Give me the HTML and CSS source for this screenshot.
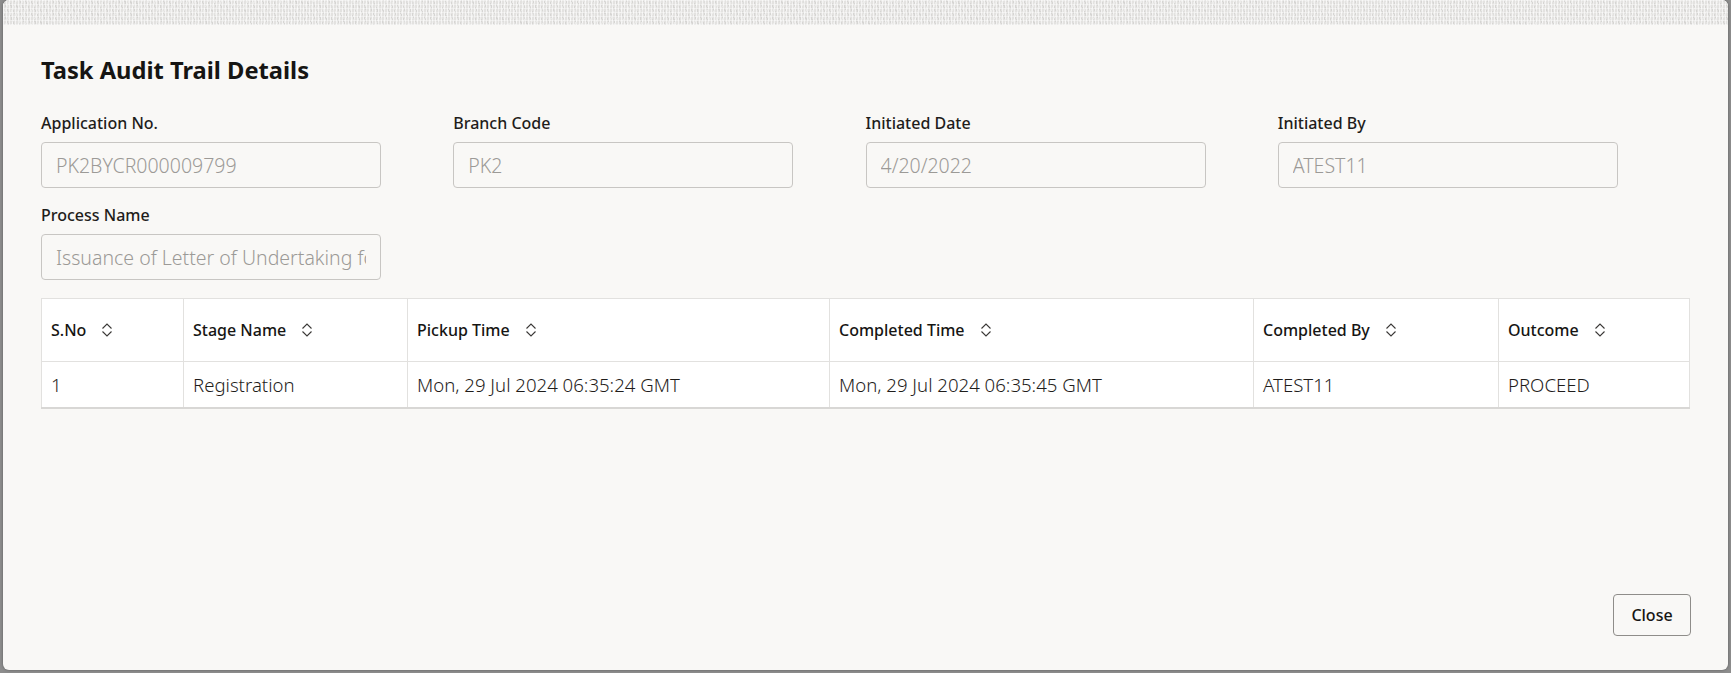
FILE: index.html
```html
<!DOCTYPE html>
<html lang="en">
<head>
<meta charset="utf-8">
<title>Task Audit Trail Details</title>
<link rel="stylesheet" href="styles.css">
</head>
<body>
<div class="dialog">
  <div class="dialog-strip"></div>
  <div class="dialog-body">
    <h1 class="title">Task Audit Trail Details</h1>
    <div class="fields">
      <div class="field">
        <label class="field-label">Application No.</label>
        <input class="field-input" type="text" readonly value="PK2BYCR000009799">
      </div>
      <div class="field">
        <label class="field-label">Branch Code</label>
        <input class="field-input" type="text" readonly value="PK2">
      </div>
      <div class="field">
        <label class="field-label">Initiated Date</label>
        <input class="field-input" type="text" readonly value="4/20/2022">
      </div>
      <div class="field">
        <label class="field-label">Initiated By</label>
        <input class="field-input" type="text" readonly value="ATEST11">
      </div>
      <div class="field">
        <label class="field-label">Process Name</label>
        <input class="field-input" type="text" readonly value="Issuance of Letter of Undertaking for Import">
      </div>
    </div>
    <table class="grid">
      <colgroup>
        <col class="c1"><col class="c2"><col class="c3"><col class="c4"><col class="c5"><col class="c6">
      </colgroup>
      <thead>
        <tr>
          <th><span class="th-inner">S.No<svg class="sort" viewBox="0 0 12 14" width="12" height="14"><path d="M1.5 5.5 L6 1 L10.5 5.5 M1.5 8.5 L6 13 L10.5 8.5"/></svg></span></th>
          <th><span class="th-inner">Stage Name<svg class="sort" viewBox="0 0 12 14" width="12" height="14"><path d="M1.5 5.5 L6 1 L10.5 5.5 M1.5 8.5 L6 13 L10.5 8.5"/></svg></span></th>
          <th><span class="th-inner">Pickup Time<svg class="sort" viewBox="0 0 12 14" width="12" height="14"><path d="M1.5 5.5 L6 1 L10.5 5.5 M1.5 8.5 L6 13 L10.5 8.5"/></svg></span></th>
          <th><span class="th-inner">Completed Time<svg class="sort" viewBox="0 0 12 14" width="12" height="14"><path d="M1.5 5.5 L6 1 L10.5 5.5 M1.5 8.5 L6 13 L10.5 8.5"/></svg></span></th>
          <th><span class="th-inner">Completed By<svg class="sort" viewBox="0 0 12 14" width="12" height="14"><path d="M1.5 5.5 L6 1 L10.5 5.5 M1.5 8.5 L6 13 L10.5 8.5"/></svg></span></th>
          <th><span class="th-inner">Outcome<svg class="sort" viewBox="0 0 12 14" width="12" height="14"><path d="M1.5 5.5 L6 1 L10.5 5.5 M1.5 8.5 L6 13 L10.5 8.5"/></svg></span></th>
        </tr>
      </thead>
      <tbody>
        <tr>
          <td>1</td>
          <td>Registration</td>
          <td>Mon, 29 Jul 2024 06:35:24 GMT</td>
          <td>Mon, 29 Jul 2024 06:35:45 GMT</td>
          <td>ATEST11</td>
          <td>PROCEED</td>
        </tr>
      </tbody>
    </table>
  </div>
  <div class="dialog-footer">
    <button class="btn" type="button">Close</button>
  </div>
</div>
</body>
</html>
```
FILE: styles.css
```css
html, body {
  margin: 0;
  padding: 0;
}
body {
  background: #8d8d8d;
  font-family: "Noto Sans", "Open Sans", sans-serif;
  color: #161513;
  height: 673px;
  overflow: hidden;
}
.dialog {
  margin: 0 3px;
  height: 670px;
  background: #f9f8f6;
  border-radius: 6px;
  box-shadow: 0 0 3px rgba(0, 0, 0, 0.35);
  display: flex;
  flex-direction: column;
  overflow: hidden;
}
.dialog-strip {
  height: 25px;
  flex: none;
  background-color: #e3e2e0;
  background-image:
    repeating-linear-gradient(90deg, rgba(255,255,255,0.6) 0 1px, transparent 1px 3px),
    repeating-linear-gradient(0deg, rgba(255,255,255,0.4) 0 1px, transparent 1px 4px),
    repeating-linear-gradient(65deg, rgba(0,0,0,0.06) 0 1px, transparent 1px 5px),
    repeating-linear-gradient(115deg, rgba(255,255,255,0.3) 0 1px, transparent 1px 6px);
}
.dialog-body {
  flex: 1;
  padding: 29px 38px 0;
}
.title {
  margin: 0;
  font-size: 23.7px;
  line-height: 32px;
  font-weight: 700;
  color: #161513;
}
.fields {
  margin-top: 25px;
  display: grid;
  grid-template-columns: repeat(4, 1fr);
  row-gap: 15px;
}
.field {
  display: flex;
  flex-direction: column;
}
.field-label {
  font-size: 16px;
  line-height: 24px;
  font-weight: 500;
  color: #1f1d1b;
  margin-bottom: 7px;
}
.field-input {
  box-sizing: border-box;
  width: 340px;
  height: 46px;
  margin: 0;
  padding: 0 14px;
  border: 1px solid #c8c6c3;
  border-radius: 4px;
  background: #f9f8f6;
  font-family: "Noto Sans", "Open Sans", sans-serif;
  font-size: 19.5px;
  font-weight: 300;
  color: #9c9a97;
  outline: none;
}
.grid {
  margin-top: 18px;
  width: 100%;
  table-layout: fixed;
  border-collapse: collapse;
  background: #ffffff;
  border: 1px solid #e2e1df;
  border-bottom: 2px solid #d8d7d5;
}
.c1 { width: 142px; }
.c2 { width: 224px; }
.c3 { width: 422px; }
.c4 { width: 424px; }
.c5 { width: 245px; }
.c6 { width: auto; }
.grid th,
.grid td {
  border-left: 1px solid #e2e1df;
  border-right: 1px solid #e2e1df;
  padding: 0 9px;
  text-align: left;
  white-space: nowrap;
  overflow: hidden;
}
.grid th {
  height: 62px;
  font-size: 16px;
  font-weight: 500;
  color: #161513;
  border-bottom: 1px solid #e2e1df;
}
.th-inner {
  display: inline-flex;
  align-items: center;
}
.sort {
  margin-left: 15px;
  fill: none;
  stroke: #3a3836;
  stroke-width: 1.1;
}
.grid td {
  height: 45px;
  font-size: 18.6px;
  font-weight: 300;
  color: #1f1d1b;
}
.dialog-footer {
  flex: none;
  display: flex;
  justify-content: flex-end;
  padding: 0 37px 34px;
}
.btn {
  box-sizing: border-box;
  width: 78px;
  height: 42px;
  border: 1px solid #8f8d8a;
  border-radius: 4px;
  background: #f9f8f6;
  font-family: "Noto Sans", "Open Sans", sans-serif;
  font-size: 16px;
  font-weight: 500;
  color: #161513;
  padding: 0;
}
```
